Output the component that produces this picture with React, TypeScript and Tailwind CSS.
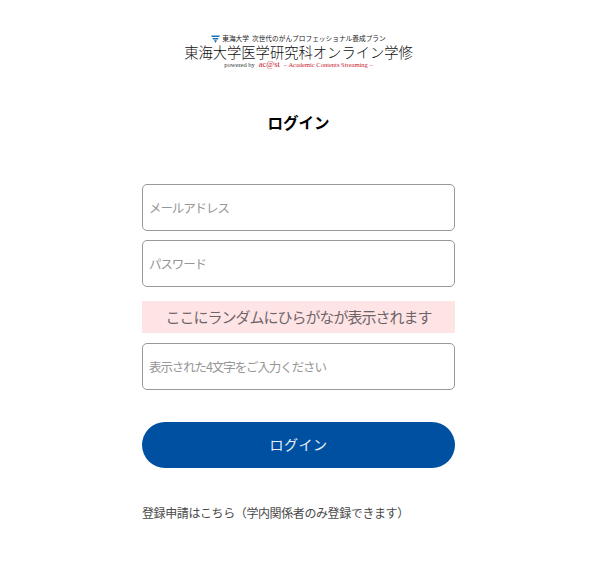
import React from 'react';

const cjk = "font-['Noto_Sans_CJK_JP',sans-serif]";

function Field({ placeholder }: { placeholder: string }) {
  return (
    <input
      type="text"
      placeholder={placeholder}
      className="block w-full h-[47px] px-[6px] bg-white border border-[#999999] rounded-[5px] outline-none text-[12.5px] tracking-[-1.1px] text-[#333] placeholder:text-[#969696]"
    />
  );
}

export default function App() {
  return (
    <div className={`h-[580px] bg-white ${cjk} overflow-hidden`}>
      <div className="w-[313px] ml-[142px] pt-[33px]">
        {/* Logo */}
        <div className="flex flex-col items-center text-black h-[36px] -mx-[10px]">
          <div className="flex items-center h-[11px] gap-[2px] text-[6.7px] leading-[11px] text-[#222] whitespace-nowrap">
            <svg width="9" height="8" viewBox="0 0 9 8" className="shrink-0">
              <path d="M0 0.5h9L8 2H1zM1.5 3h6L7 4.4H2zM3 5.2h3L4.5 8z" fill="#1b6fb5" />
            </svg>
            <span>東海大学&nbsp;&nbsp;次世代のがんプロフェッショナル養成プラン</span>
          </div>
          <div className="h-[16px] text-[14.3px] leading-[16px] font-light whitespace-nowrap text-[#111]">
            東海大学医学研究科オンライン学修
          </div>
          <div className="flex items-center h-[9px] gap-[4px] text-[6.5px] leading-[9px] font-['Liberation_Serif',serif] whitespace-nowrap text-[#333]">
            <span>powered by</span>
            <span className="text-[#c8202c] text-[8.5px] leading-[9px]">ac@st</span>
            <span className="text-[#c8202c]">– Academic Contents Streaming –</span>
          </div>
        </div>

        <h1 className="mt-[41px] h-[24px] text-center text-[15.5px] leading-[24px] font-bold text-black">ログイン</h1>

        {/* Form */}
        <form className="mt-[50px]">
          <Field placeholder="メールアドレス" />
          <div className="mt-[9px]">
            <Field placeholder="パスワード" />
          </div>
          <div className="mt-[14px] h-[32px] bg-[#ffe4e6] text-center text-[15px] tracking-[-1px] leading-[32px] text-[#6e6468] whitespace-nowrap">
            ここにランダムにひらがなが表示されます
          </div>
          <div className="mt-[10px]">
            <Field placeholder="表示された4文字をご入力ください" />
          </div>
          <button
            type="button"
            className="block w-full mt-[32px] h-[46px] pb-[2px] rounded-full bg-[#0050a2] text-[#e8eef6] text-[14px] tracking-[0.5px]"
          >
            ログイン
          </button>
        </form>

        <p className="mt-[36px] text-[12px] tracking-[-0.4px] leading-[18px] text-[#4a4a4a] whitespace-nowrap">
          登録申請はこちら（学内関係者のみ登録できます）
        </p>
      </div>
    </div>
  );
}
